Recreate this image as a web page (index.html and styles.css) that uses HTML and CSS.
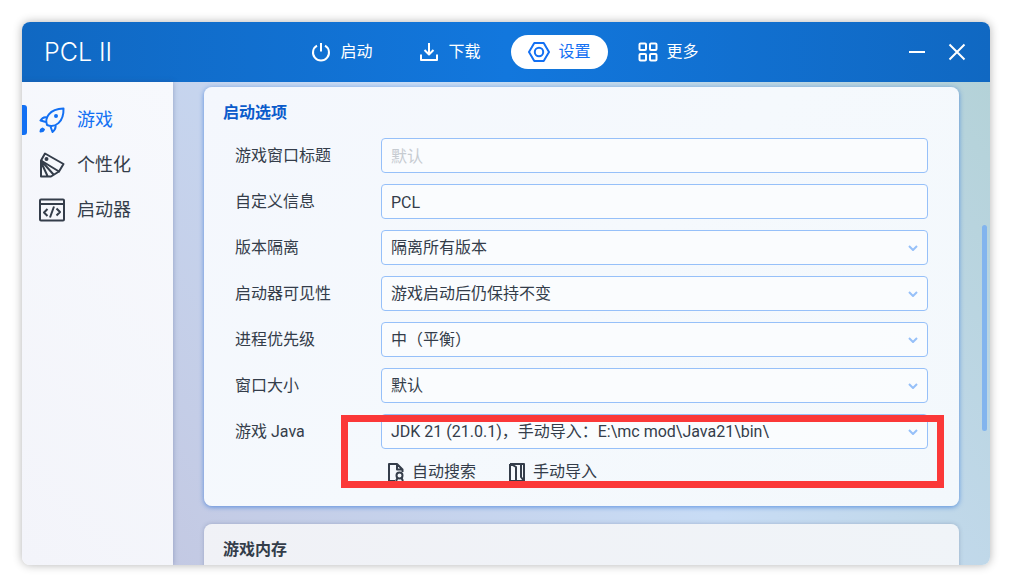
FILE: index.html
```
<!DOCTYPE html>
<html lang="zh-CN">
<head>
  <meta charset="UTF-8">
  <meta name="viewport" content="width=device-width, initial-scale=1.0">
  <title>PCL II</title>
  <link rel="stylesheet" href="styles.css">
</head>
<body>
  <div class="window">
    <header class="titlebar">
      <h1 class="logo">PCL II</h1>
      <nav class="tabs">
        <button type="button" class="tab">
          <svg viewBox="0 0 20 20"><path d="M6 3.6a8 8 0 1 0 8 0M10 1v8.5" /></svg>
          启动
        </button>
        <button type="button" class="tab">
          <svg viewBox="0 0 20 20"><path d="M10 1v11.500M5.500 8l4.500 4.500 4.500-4.500M2 12.500V18h16v-5.500" /></svg>
          下载
        </button>
        <button type="button" class="tab active">
          <svg class="wide" viewBox="0 0 22 20"><path d="M6.300 1h9.400L21 10l-5.300 9H6.300L1 10z" /><circle cx="11" cy="10" r="4.200" /></svg>
          设置
        </button>
        <button type="button" class="tab">
          <svg viewBox="0 0 20 20"><rect x="1.500" y="1.500" width="6.500" height="6.500" rx="1" /><rect x="12" y="1.500" width="6.500" height="6.500" rx="1" /><rect x="1.500" y="12" width="6.500" height="6.500" rx="1" /><rect x="12" y="12" width="6.500" height="6.500" rx="1" /></svg>
          更多
        </button>
      </nav>
      <div class="controls">
        <button type="button" aria-label="最小化"><svg viewBox="0 0 18 18"><path d="M1 9h16" /></svg></button>
        <button type="button" aria-label="关闭"><svg viewBox="0 0 18 18"><path d="M1.500 1.500l15 15M16.500 1.500l-15 15" /></svg></button>
      </div>
    </header>

    <div class="body">
      <aside class="sidebar">
        <a href="#game" class="side-item active">
          <svg viewBox="0 0 26 26"><path d="M8 18C5.500 11 10 2 24.500 1.500 25 15 16 21.500 8 18z" /><path d="M8 10.500C5 9.500 3 11 1.500 13.500L7 15M16.500 18.500C17 21.500 15.500 23.500 13.500 25L11.500 19.500" /><circle cx="17" cy="9" r="1" class="fill" /><path class="fill" d="M3.500 21.500l1.500 1-1 1.500-2.500.500.500-2z" /></svg>
          游戏
        </a>
        <a href="#personal" class="side-item">
          <svg viewBox="0 0 26 26"><path d="M6 1.500L24.500 12 20 19.500 2 8.500z" /><path d="M2 8.500v16h10l8-5M2 8.500l12.500 14M2 10l6.500 14" /><circle cx="7.500" cy="7" r="1" class="fill" /></svg>
          个性化
        </a>
        <a href="#launcher" class="side-item">
          <svg viewBox="0 0 26 26"><rect x="1" y="2.500" width="24" height="21" rx="1" /><path d="M1 7h24M8.500 12L5 15.500 8.500 19M17.500 11.500L21 15l-3.500 3.500M15 9.500l-4 11" /></svg>
          启动器
        </a>
      </aside>

      <main class="content">
        <section class="card focused">
          <h2>启动选项</h2>
          <form class="form">
            <label for="title">游戏窗口标题</label>
            <input type="text" id="title" placeholder="默认">

            <label for="info">自定义信息</label>
            <input type="text" id="info" value="PCL">

            <label for="isolation">版本隔离</label>
            <div class="select">
              <select id="isolation"><option>隔离所有版本</option></select>
              <svg viewBox="0 0 10 6"><path d="M1 1l4 4 4-4" /></svg>
            </div>

            <label for="visibility">启动器可见性</label>
            <div class="select">
              <select id="visibility"><option>游戏启动后仍保持不变</option></select>
              <svg viewBox="0 0 10 6"><path d="M1 1l4 4 4-4" /></svg>
            </div>

            <label for="priority">进程优先级</label>
            <div class="select">
              <select id="priority"><option>中（平衡）</option></select>
              <svg viewBox="0 0 10 6"><path d="M1 1l4 4 4-4" /></svg>
            </div>

            <label for="size">窗口大小</label>
            <div class="select">
              <select id="size"><option>默认</option></select>
              <svg viewBox="0 0 10 6"><path d="M1 1l4 4 4-4" /></svg>
            </div>

            <label for="java">游戏 Java</label>
            <div class="java">
              <div class="select">
                <select id="java"><option>JDK 21 (21.0.1)，手动导入：E:\mc mod\Java21\bin\</option></select>
                <svg viewBox="0 0 10 6"><path d="M1 1l4 4 4-4" /></svg>
              </div>
              <div class="actions">
                <button type="button">
                  <svg viewBox="0 0 18 20"><path d="M8 19H2V2h8l5.500 5.500V10M10 2v5.500h5.500" /><circle cx="12.500" cy="13.500" r="3" /><path d="M10.500 16L9 19M14.500 16l1.500 3" /></svg>
                  自动搜索
                </button>
                <button type="button">
                  <svg viewBox="0 0 18 20"><path d="M2 2h14v17h-8M2 2v17h6V5L3 2M13 2v13l3 4" /></svg>
                  手动导入
                </button>
              </div>
              <div class="highlight"></div>
            </div>
          </form>
        </section>

        <section class="card">
          <h2>游戏内存</h2>
        </section>

        <div class="scrollbar"></div>
      </main>
    </div>
  </div>
</body>
</html>
```
FILE: styles.css
```
* {
  box-sizing: border-box;
}
body {
  margin: 0;
  padding: 22px 23px 23px 22px;
  height: 100vh;
  background: #fff;
  color: #343d4a;
  font-family: Roboto, "Noto Sans CJK SC", sans-serif;
  font-size: 16px;
  line-height: 24px;
}
button, input, select {
  font: inherit;
  color: inherit;
}
button {
  border: none;
  padding: 0;
  background: none;
  cursor: pointer;
}
svg {
  flex: none;
  fill: none;
  stroke: currentColor;
  stroke-width: 2;
  stroke-linejoin: round;
}
svg .fill {
  fill: currentColor;
}

.window {
  height: 100%;
  display: flex;
  flex-direction: column;
  border-radius: 8px;
  overflow: hidden;
  box-shadow: 0 0 10px rgba(0,0,0,0.3);
}

/* title bar */
.titlebar {
  flex: none;
  display: grid;
  grid-template-columns: 1fr auto 1fr;
  align-items: center;
  height: 60px;
  padding: 0 24px 0 22px;
  background: linear-gradient(90deg, #1068c2, #1277dd 50%, #1068c2);
  color: #fff;
}
.logo {
  margin: 0;
  font-family: Inter, sans-serif;
  font-size: 25px;
  font-weight: 300;
}
.tabs {
  display: flex;
  gap: 13px;
}
.tab {
  display: flex;
  align-items: center;
  gap: 9px;
  height: 34px;
  padding: 0 17px;
  border-radius: 17px;
}
.tab svg {
  width: 20px;
  height: 20px;
}
.tab svg.wide {
  width: 22px;
}
.tab.active {
  background: #fff;
  color: #1370f3;
}
.controls {
  display: flex;
  justify-content: flex-end;
  gap: 22px;
}
.controls svg {
  display: block;
  width: 18px;
  height: 18px;
}

.body {
  flex: 1;
  display: flex;
  min-height: 0;
}

/* sidebar */
.sidebar {
  flex: none;
  width: 151px;
  padding-top: 15px;
  background: linear-gradient(45deg, #f3f4fa, #f7f9fd);
  box-shadow: 0 0 5px rgba(50,70,120,0.35);
  z-index: 1;
}
.side-item {
  display: flex;
  align-items: center;
  gap: 12px;
  height: 45px;
  padding-left: 17px;
  font-size: 18px;
  color: inherit;
  text-decoration: none;
  position: relative;
}
.side-item svg {
  width: 26px;
  height: 26px;
}
.side-item.active {
  color: #1370f3;
}
.side-item.active::before {
  content: "";
  position: absolute;
  left: 0;
  top: 8px;
  width: 5px;
  height: 30px;
  border-radius: 0 3px 3px 0;
  background: #1370f3;
}

/* settings */
.content {
  flex: 1;
  position: relative;
  padding: 5px 31px 0;
  overflow: hidden;
  background: linear-gradient(55deg, #c3c9e3, #c8dcf5 50%, #b4d2d8);
}
.card {
  margin-bottom: 18px;
  padding: 14px 31px 22px 19px;
  border-radius: 8px;
  background: linear-gradient(45deg, #f0f1f6, #f0f4f8);
  box-shadow: 0 0 4px rgba(60,80,120,0.3);
}
.card.focused {
  background: linear-gradient(135deg, #f4f7fd, #f5f9fd 50%, #f3f8fc);
  box-shadow: 0 1px 5px rgba(30,105,215,0.65);
}
.card h2 {
  margin: 0;
  font-size: 16px;
  font-weight: 700;
}
.card.focused h2 {
  color: #0b5bcb;
}
.form {
  display: grid;
  grid-template-columns: 146px 1fr;
  row-gap: 11px;
  margin: 13px 0 0 12px;
}
.form label {
  line-height: 36px;
}
.form input, .form select {
  display: block;
  width: 100%;
  height: 35px;
  padding: 1px 9px 0;
  border: 1px solid #96c0f9;
  border-radius: 4px;
  background: rgba(255,255,255,0.5);
  outline: none;
  appearance: none;
}
.form label {
  height: 35px;
}
.form input::placeholder {
  color: #c6cbd1;
}
.select {
  position: relative;
}
.select svg {
  position: absolute;
  right: 10px;
  top: 15px;
  width: 10px;
  height: 6px;
  color: #96c0f9;
}
.java {
  position: relative;
}
.actions {
  display: flex;
  gap: 32px;
  padding: 11px 0 0 6px;
}
.actions button {
  display: flex;
  align-items: center;
  gap: 7px;
}
.actions svg {
  width: 18px;
  height: 20px;
}
.highlight {
  position: absolute;
  inset: 1px -16px -4px -40px;
  border: 7px solid #fb3838;
  pointer-events: none;
}
.scrollbar {
  position: absolute;
  right: 3px;
  top: 143px;
  width: 5px;
  height: 206px;
  border-radius: 3px;
  background: #82b4ee;
}
```
